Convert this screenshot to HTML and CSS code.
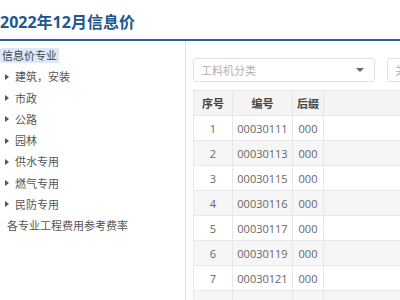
FILE: index.html
```html
<!DOCTYPE html>
<html lang="zh-CN">
<head>
  <meta charset="UTF-8">
  <title>2022年12月信息价</title>
  <link rel="stylesheet" href="styles.css">
</head>
<body>

  <div class="title">2022年12月信息价</div>

  <div class="main">
    <div class="side">
      <ul class="tree">
        <li class="root"><span class="sel">信息价专业</span></li>
        <li class="node"><span class="arrow"></span>建筑，安装</li>
        <li class="node"><span class="arrow"></span>市政</li>
        <li class="node"><span class="arrow"></span>公路</li>
        <li class="node"><span class="arrow"></span>园林</li>
        <li class="node"><span class="arrow"></span>供水专用</li>
        <li class="node"><span class="arrow"></span>燃气专用</li>
        <li class="node"><span class="arrow"></span>民防专用</li>
        <li class="leaf">各专业工程费用参考费率</li>
      </ul>
    </div>

    <div class="content">
      <div class="filters">
        <div class="select">
          <span class="ph">工料机分类</span>
          <span class="caret"></span>
        </div>
        <div class="search"><span class="ph">关键字</span></div>
      </div>

      <table class="grid">
        <thead>
          <tr><th class="c1">序号</th><th class="c2">编号</th><th class="c3">后缀</th><th></th></tr>
        </thead>
        <tbody>
          <tr><td>1</td><td>00030111</td><td>000</td><td></td></tr>
          <tr><td>2</td><td>00030113</td><td>000</td><td></td></tr>
          <tr><td>3</td><td>00030115</td><td>000</td><td></td></tr>
          <tr><td>4</td><td>00030116</td><td>000</td><td></td></tr>
          <tr><td>5</td><td>00030117</td><td>000</td><td></td></tr>
          <tr><td>6</td><td>00030119</td><td>000</td><td></td></tr>
          <tr><td>7</td><td>00030121</td><td>000</td><td></td></tr>
          <tr><td>8</td><td>00030123</td><td>000</td><td></td></tr>
        </tbody>
      </table>
    </div>
  </div>

</body>
</html>
```

FILE: styles.css
```css
body {
  margin: 0;
  font-family: "Open Sans", "Noto Sans CJK SC", sans-serif;
  background: #fff;
  color: #555;
  overflow: hidden;
}

.title {
  height: 39px;
  line-height: 45px;
  font-size: 16px;
  font-weight: bold;
  color: #1f5690;
  border-bottom: 2px solid #2d5f94;
  white-space: nowrap;
}

.main {
  display: flex;
  height: 260px;
}

.side {
  width: 185px;
  flex: none;
  border-right: 1px solid #e2e2e2;
}

.tree {
  list-style: none;
  margin: 0;
  padding: 4px 0 0 0;
  font-size: 11px;
}

.tree li {
  height: 21.25px;
  line-height: 21.25px;
  white-space: nowrap;
  display: flex;
  align-items: center;
}

.sel {
  background: #dce9f8;
  color: #444;
  padding: 0 2px;
  line-height: 15px;
  border-radius: 2px;
}

.node {
  padding-left: 5px;
}

.arrow {
  width: 0;
  height: 0;
  border-top: 3px solid transparent;
  border-bottom: 3px solid transparent;
  border-left: 4px solid #555;
  margin-right: 6px;
}

.leaf {
  padding-left: 7px;
}

.content {
  flex: 1;
  padding: 17px 0 0 7px;
  min-width: 0;
}

.filters {
  display: flex;
  gap: 12px;
  height: 24px;
}

.select, .search {
  box-sizing: border-box;
  flex: none;
  height: 24px;
  border: 1px solid #e3e3e3;
  border-radius: 3px;
  display: flex;
  align-items: center;
  padding: 0 7px;
  font-size: 11px;
  white-space: nowrap;
}

.select {
  width: 182px;
  justify-content: space-between;
}

.search {
  width: 120px;
}

.ph {
  color: #b0b0b0;
}

.caret {
  width: 0;
  height: 0;
  border-left: 4px solid transparent;
  border-right: 4px solid transparent;
  border-top: 4px solid #666;
  margin-right: 3px;
}

.grid {
  margin-top: 8px;
  border-collapse: collapse;
  width: 400px;
  font-size: 11px;
  color: #666;
}

.grid th, .grid td {
  border: 1px solid #e8e8e8;
  height: 24px;
  padding: 0;
  text-align: center;
  white-space: nowrap;
}

.grid th {
  background: #f4f4f4;
  color: #444;
  font-weight: bold;
}

.grid .c1 { width: 38px; }
.grid .c2 { width: 59px; }
.grid .c3 { width: 30px; }

.grid tbody tr:nth-child(even) td {
  background: #f6f6f6;
}
```
